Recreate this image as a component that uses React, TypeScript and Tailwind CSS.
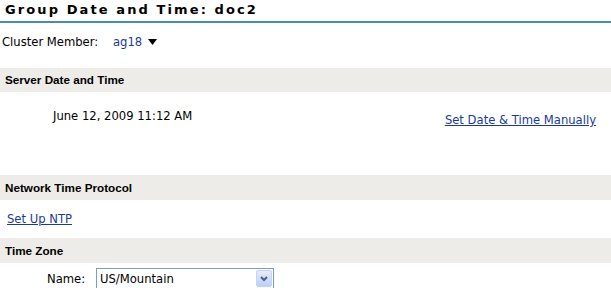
export default function App() {
  return (
    <div className="w-[611px] h-[288px] overflow-hidden bg-white text-[11.6px] leading-[14px] text-black font-['DejaVu_Sans',sans-serif]">
      <div className="h-[21px] pl-[5px] pt-[2px] text-[13px] font-bold tracking-[2.1px] leading-[15px]">
        Group Date and Time: doc2
      </div>
      <div className="h-[2px] bg-[#4a8ab8]" />

      <div className="flex items-center h-[20px] mt-[9px] pl-[2px]">
        <span className="w-[111px]">Cluster Member:</span>
        <span className="text-[#1a3a9a]">ag18</span>
        <svg width="9" height="6" viewBox="0 0 9 6" className="ml-[6px]">
          <path d="M0 0 H9 L4.5 6 Z" fill="#000" />
        </svg>
      </div>

      <div className="mt-[16px] h-[24px] flex items-center pl-[5px] bg-[#eeece8] font-bold font-['Liberation_Sans',sans-serif] text-[11.7px]">
        Server Date and Time
      </div>

      <div className="flex items-start justify-between h-[83px] pt-[17px] pl-[53px] pr-[15px]">
        <span>June 12, 2009 11:12 AM</span>
        <a href="#" className="text-[#1a3a9a] underline mt-[4px]">Set Date &amp; Time Manually</a>
      </div>

      <div className="h-[25px] flex items-center pl-[5px] bg-[#eeece8] font-bold font-['Liberation_Sans',sans-serif] text-[11.7px]">
        Network Time Protocol
      </div>

      <div className="h-[38px] flex items-center pl-[7px]">
        <a href="#" className="text-[#1a3a9a] underline">Set Up NTP</a>
      </div>

      <div className="h-[25px] flex items-center pl-[5px] bg-[#eeece8] font-bold font-['Liberation_Sans',sans-serif] text-[11.7px]">
        Time Zone
      </div>

      <div className="flex items-center mt-[5px] pl-[47px]">
        <span className="w-[49px]">Name:</span>
        <div className="flex items-center justify-between w-[178px] h-[21px] border border-[#7f9db9] pl-[3px] pr-[1px]">
          <span>US/Mountain</span>
          <div className="w-[16px] h-[17px] rounded-[2px] bg-gradient-to-b from-[#e6eefc] to-[#bccef7] border border-[#c3d3fd] flex items-center justify-center">
            <svg width="8" height="6" viewBox="0 0 8 6">
              <path d="M1 1 L4 4 L7 1" stroke="#4d6185" strokeWidth="2" fill="none" />
            </svg>
          </div>
        </div>
      </div>
    </div>
  );
}
